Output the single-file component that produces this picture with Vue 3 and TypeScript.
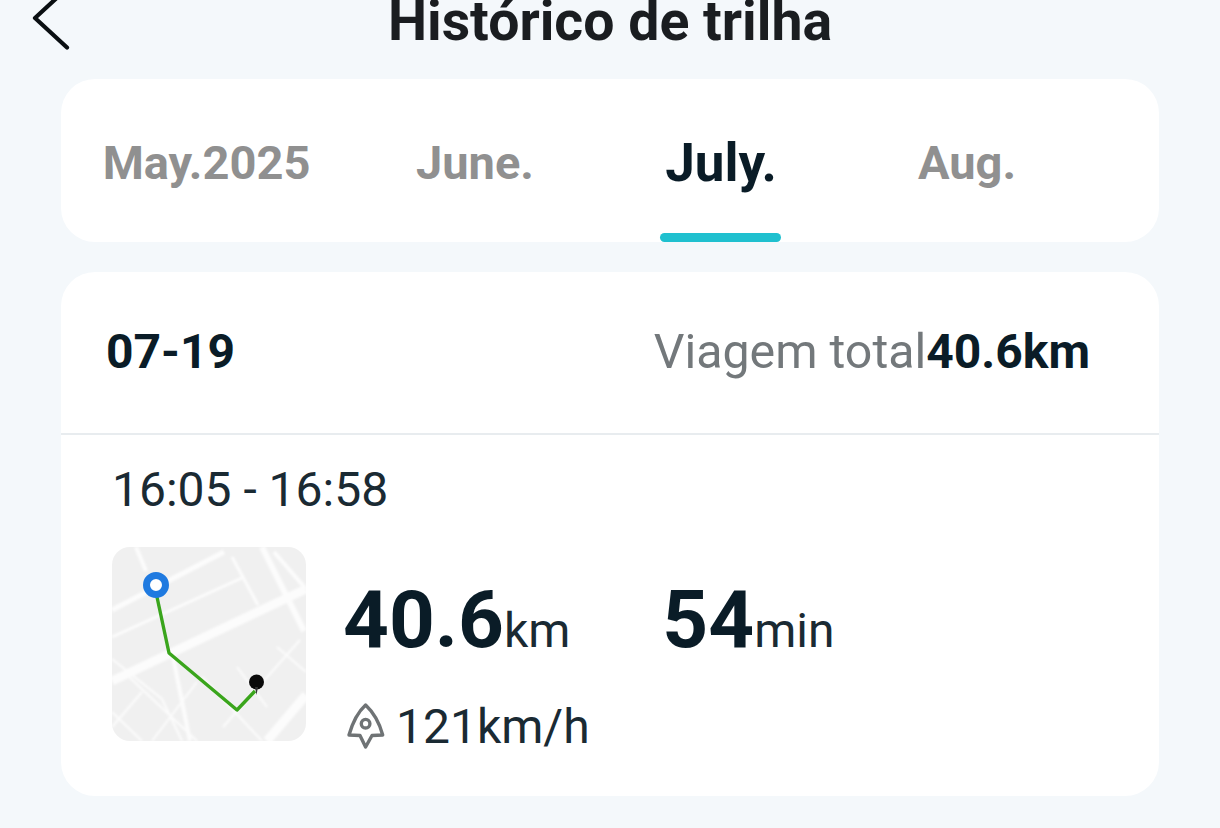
<script setup lang="ts">
const months = [
  { label: 'May.2025', active: false },
  { label: 'June.', active: false },
  { label: 'July.', active: true },
  { label: 'Aug.', active: false },
]
</script>

<template>
  <div class="page">
    <header class="top">
      <svg class="back" width="40" height="56" viewBox="0 0 40 56" fill="none">
        <path d="M28 -6 L2 18 L34 47.500" stroke="#0a0f12" stroke-width="4.200" stroke-linecap="round" stroke-linejoin="round" />
      </svg>
      <h1 class="title">Histórico de trilha</h1>
    </header>

    <nav class="tabs">
      <div v-for="m in months" :key="m.label" class="tab" :class="{ on: m.active }">
        <span>{{ m.label }}</span>
        <i v-if="m.active" class="bar"></i>
      </div>
    </nav>

    <section class="card">
      <div class="day">
        <span class="date">07-19</span>
        <span class="total"><span class="total-l">Viagem total</span><b>40.6km</b></span>
      </div>
      <div class="trip">
        <div class="time">16:05 - 16:58</div>
        <div class="body">
          <svg class="map" width="194" height="194" viewBox="0 0 194 194">
            <defs>
              <filter id="soft" x="-5%" y="-5%" width="110%" height="110%"><feGaussianBlur stdDeviation="0.8" /></filter>
              <clipPath id="mapclip"><rect width="194" height="194" rx="18" /></clipPath>
            </defs>
            <g clip-path="url(#mapclip)">
              <rect width="194" height="194" fill="#f0f0f0" />
              <g stroke="#fcfcfc" fill="none" filter="url(#soft)">
                <path d="M0 134 L194 42" stroke-width="9" />
                <path d="M0 63 L112 5" stroke-width="5" />
                <path d="M0 90 L132 30" stroke-width="3" />
                <path d="M24 0 L34 24" stroke-width="4" />
                <path d="M150 0 L192 84" stroke-width="6" />
                <path d="M120 10 L146 58" stroke-width="3" />
                <path d="M162 5 L194 42" stroke-width="4" />
                <path d="M61 110 L78 194" stroke-width="4" />
                <path d="M0 112 L50 152 L70 194 M15 128 L85 194 M0 165 L30 194 M0 180 L30 145 M40 194 L85 135 M90 130 L150 194" stroke-width="2" />
                <path d="M188 93 L111 180 M125 120 L155 160 M165 100 L194 125" stroke-width="2" />
                <path d="M155 194 L194 148" stroke-width="9" />
              </g>
            </g>
            <path d="M45 50 L57 106 L125 163 L143 144" fill="none" stroke="#3aa51c" stroke-width="3.400" stroke-linejoin="round" />
            <circle cx="44" cy="38" r="9.500" fill="#fff" stroke="#1f7ae0" stroke-width="7" />
            <circle cx="144.500" cy="135" r="7.500" fill="#0a0a0a" />
            <path d="M143 140 h3 l-1.500 8 z" fill="#333" />
          </svg>
          <div class="stats">
            <div class="big">
              <span class="num"><b>40.6</b><small>km</small></span>
              <span class="num second"><b>54</b><small>min</small></span>
            </div>
            <div class="speed">
              <svg width="40" height="48" viewBox="0 0 40 48" fill="none">
                <path d="M19.600 3 C26 9 33 19 36.700 33 L26 33.500 L19.600 45 L14 33.500 L3 33 C7 19 13 9 19.600 3 Z" stroke="#6f7375" stroke-width="3.400" stroke-linejoin="round" />
                <circle cx="19.600" cy="21.700" r="4.300" stroke="#6f7375" stroke-width="3.400" />
              </svg>
              <span class="speed-v">121km/h</span>
            </div>
          </div>
        </div>
      </div>
    </section>
  </div>
</template>

<style>
html, body { margin: 0; background: #f4f8fb; }
</style>

<style scoped>
.page {
  width: 1220px;
  height: 828px;
  box-sizing: border-box;
  overflow: hidden;
  background: #f4f8fb;
  font-family: Roboto, "Liberation Sans", sans-serif;
  color: #0a1c27;
}
.top {
  height: 79px;
  position: relative;
  display: flex;
  justify-content: center;
}
.back { position: absolute; left: 33px; top: 0; overflow: visible; }
.title {
  margin: 0;
  font-size: 55.4px;
  line-height: 44px;
  font-weight: 700;
  color: #1a1d20;
}
.tabs {
  margin: 0 61px;
  height: 163px;
  background: #fff;
  border-radius: 34px;
  display: grid;
  grid-template-columns: 291px 246px 246px 246px;
}
.tab {
  position: relative;
  display: flex;
  justify-content: center;
  padding-top: 56px;
  font-size: 47px;
  line-height: 56px;
  font-weight: 700;
  color: #909090;
}
.tab.on { color: #0a1c27; font-size: 53px; }
.bar {
  position: absolute;
  bottom: 0;
  left: 50%;
  width: 121px;
  height: 9px;
  margin-left: -61px;
  border-radius: 5px;
  background: #1fc0cf;
}
.card {
  margin: 30px 61px 0;
  height: 524px;
  background: #fff;
  border-radius: 34px;
  display: flex;
  flex-direction: column;
}
.day {
  height: 163px;
  box-sizing: border-box;
  border-bottom: 2px solid #e8ecef;
  padding: 52px 69px 0 45px;
  display: flex;
  justify-content: space-between;
  font-size: 48px;
  line-height: 56px;
}
.date { font-weight: 700; }
.total-l { color: #73787b; font-size: 48.3px; }
.total b { font-weight: 700; }
.trip { padding: 27px 0 0 51px; }
.time { font-size: 48px; line-height: 56px; color: #1a2a33; }
.body { display: flex; margin-top: 29px; }
.stats { margin-left: 37px; }
.big { display: flex; height: 118px; align-items: baseline; padding-top: 28px; box-sizing: border-box; }
.num b { font-size: 80px; font-weight: 700; line-height: 90px; }
.num small { font-size: 48px; color: #1a2a33; }
.second { margin-left: 92px; }
.speed {
  display: flex;
  align-items: center;
  gap: 10px;
  padding-left: 3px;
  font-size: 48px;
  line-height: 56px;
  color: #1a2a33;
  margin-top: 31px;
}
.speed-v { padding-top: 3px; }
</style>
